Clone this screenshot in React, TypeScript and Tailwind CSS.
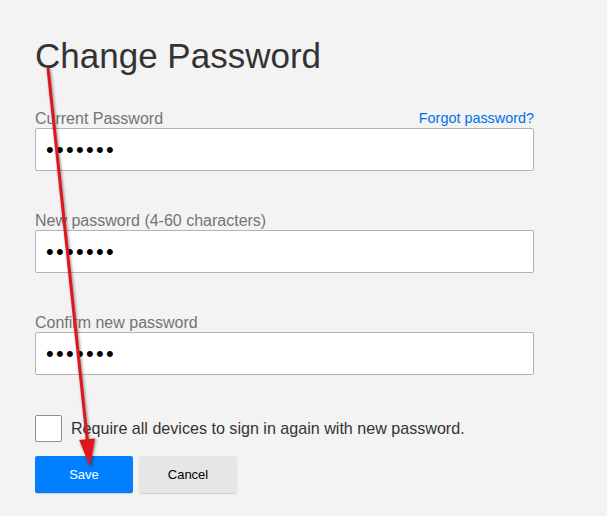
import React from 'react';

const fields = [
  { id: 'current', label: 'Current Password', forgot: true },
  { id: 'new', label: 'New password (4-60 characters)', forgot: false },
  { id: 'confirm', label: 'Confirm new password', forgot: false },
];

function PasswordField({ id, label, forgot }: { id: string; label: string; forgot: boolean }) {
  return (
    <div className="mb-[40px]">
      <div className="flex items-end justify-between h-[19px] leading-[19px]">
        <label htmlFor={id} className="text-[16px] text-[#737373]">
          {label}
        </label>
        {forgot && (
          <a href="#" className="text-[14.4px] font-medium text-[#0071eb] leading-[19px]">
            Forgot password?
          </a>
        )}
      </div>
      <input
        id={id}
        type="password"
        readOnly
        value="1234567"
        className="block w-full h-[43px] bg-white border border-[#b3b3b3] rounded-[2px] pl-[10px] text-[22px] tracking-[2.3px] text-black outline-none"
      />
    </div>
  );
}

export default function App() {
  return (
    <div
      className="relative w-[607px] h-[516px] overflow-hidden bg-[#f3f3f3]"
      style={{ fontFamily: '"Liberation Sans", Arial, sans-serif' }}
    >
      <div className="w-[499px] ml-[35px] pt-[39px]">
        <h1 className="text-[35px] leading-[34px] text-[#333] mb-[36px]">Change Password</h1>

        {fields.map(f => (
          <PasswordField key={f.id} {...f} />
        ))}

        <div className="flex items-center gap-[9px] mt-[2px]">
          <span className="w-[27px] h-[27px] bg-white border border-[#8c9099] rounded-[2px]" />
          <span className="text-[16.1px] text-[#333]">Require all devices to sign in again with new password.</span>
        </div>

        <div className="flex gap-[6px] mt-[14px]">
          <button className="w-[98px] h-[37px] bg-[#0080ff] rounded-[2px] text-white text-[13px] font-medium shadow-[0_1px_1px_rgba(0,0,0,0.15)]">
            Save
          </button>
          <button className="w-[98px] h-[37px] bg-[#e6e6e6] rounded-[2px] text-black text-[13px] shadow-[0_1px_1px_rgba(0,0,0,0.15)]">
            Cancel
          </button>
        </div>
      </div>

      {/* annotation arrow */}
      <svg
        className="absolute inset-0 pointer-events-none"
        width="607"
        height="516"
        viewBox="0 0 607 516"
        style={{ filter: 'drop-shadow(1px 1px 1.5px rgba(0,0,0,0.45))' }}
      >
        <line x1="48" y1="68" x2="87.5" y2="442" stroke="#e0161b" strokeWidth="3" />
        <polygon points="90,467 95,438.4 79.2,440" fill="#e0161b" />
      </svg>
    </div>
  );
}
